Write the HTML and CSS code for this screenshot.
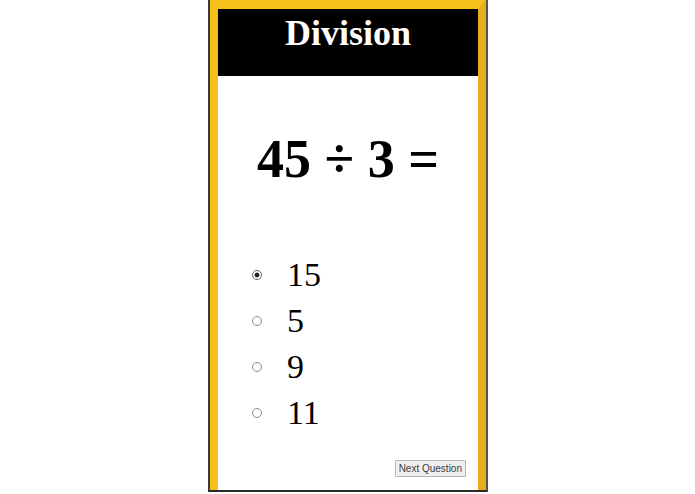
FILE: index.html
```html
<!DOCTYPE html>
<html>
<head>
<meta charset="utf-8">
<title>Division</title>
<link rel="stylesheet" href="styles.css">
</head>
<body>
<div class="device">
  <div class="screen">
    <header class="header"><h1 class="title">Division</h1></header>
    <main class="content">
      <div class="equation">45 ÷ 3 =</div>
      <form class="answers">
        <label class="answer"><input type="radio" name="a" class="radio" checked><span class="answer-text">15</span></label>
        <label class="answer"><input type="radio" name="a" class="radio"><span class="answer-text">5</span></label>
        <label class="answer"><input type="radio" name="a" class="radio"><span class="answer-text">9</span></label>
        <label class="answer"><input type="radio" name="a" class="radio"><span class="answer-text">11</span></label>
      </form>
      <div class="actions"><button type="button" class="next">Next Question</button></div>
    </main>
  </div>
</div>
</body>
</html>
```

FILE: styles.css
```css
html, body {
  margin: 0;
  padding: 0;
  background: #ffffff;
}
.device {
  margin-left: 208px;
  width: 276px;
  border-left: 2px solid #3b3b3b;
  border-right: 2px solid #555555;
  border-bottom: 2px solid #2a2a2a;
}
.screen {
  border-top: 9px solid #f3c119;
  border-left: 8px solid #f3c119;
  border-right: 8px solid #e4b11c;
  height: 481px;
  display: flex;
  flex-direction: column;
  background: #ffffff;
}
.header {
  background: #000000;
  height: 67px;
  flex: none;
}
.title {
  margin: 0;
  padding-top: 2px;
  color: #ffffff;
  font-family: "Liberation Serif", "Times New Roman", serif;
  font-weight: bold;
  font-size: 36px;
  line-height: 44px;
  text-align: center;
}
.content {
  flex: 1;
  display: flex;
  flex-direction: column;
}
.equation {
  margin-top: 48px;
  font-family: "Liberation Serif", "Times New Roman", serif;
  font-weight: bold;
  font-size: 54px;
  line-height: 70px;
  text-align: center;
  color: #000000;
}
.answers {
  margin: 58px 0 0 34px;
  display: flex;
  flex-direction: column;
}
.answer {
  height: 46px;
  display: flex;
  align-items: center;
  font-family: "Liberation Serif", "Times New Roman", serif;
  font-size: 34px;
  line-height: 46px;
  color: #000000;
}
.radio {
  -webkit-appearance: none;
  appearance: none;
  margin: 0 25px 0 0;
  width: 10px;
  height: 10px;
  border: 1px solid #8a8a8a;
  border-radius: 50%;
  background: #ffffff;
  box-sizing: border-box;
}
.radio:checked {
  background: radial-gradient(circle, #222 0 2px, #ffffff 2.8px);
  border-color: #666666;
}
.actions {
  margin-top: 24px;
  padding-right: 12px;
  display: flex;
  justify-content: flex-end;
}
.next {
  font-family: "Liberation Sans", Arial, sans-serif;
  font-size: 10px;
  height: 17px;
  padding: 0 3px;
  line-height: 15px;
  color: #3a3a3a;
  background: #efefef;
  border: 1px solid #b5b5b5;
  border-radius: 1px;
}
```
